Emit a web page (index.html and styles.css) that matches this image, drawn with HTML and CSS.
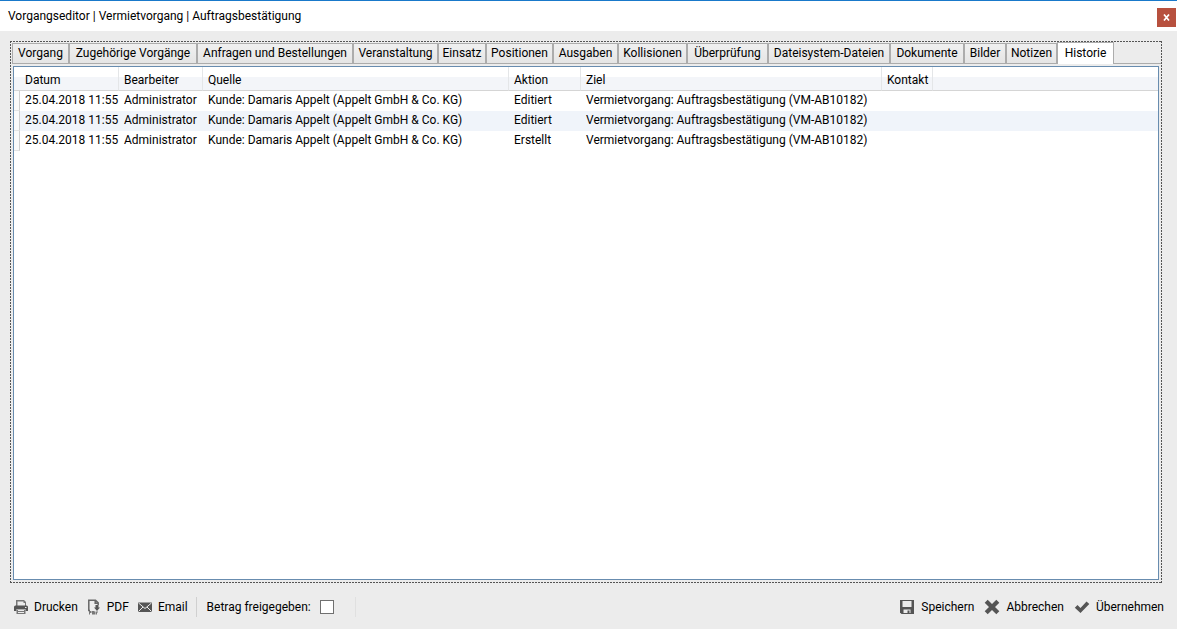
FILE: index.html
```html
<!DOCTYPE html>
<html lang="de">
<head>
<meta charset="utf-8">
<title>Vorgangseditor</title>
<link rel="stylesheet" href="styles.css">
</head>
<body>
<div class="window">
  <header class="titlebar">
    <h1 class="title">Vorgangseditor | Vermietvorgang | Auftragsbestätigung</h1>
    <button class="close" type="button" aria-label="Schließen"><svg width="7" height="7" viewBox="0 0 7 7"><path d="M1 .5 6 6.500M6 .5 1 6.500" stroke="#fff" stroke-width="1.700"/></svg></button>
  </header>
  <main class="editor">
    <div class="tabs" role="tablist">
      <button class="tab" role="tab" type="button">Vorgang</button>
      <button class="tab" role="tab" type="button">Zugehörige Vorgänge</button>
      <button class="tab" role="tab" type="button">Anfragen und Bestellungen</button>
      <button class="tab" role="tab" type="button">Veranstaltung</button>
      <button class="tab" role="tab" type="button">Einsatz</button>
      <button class="tab" role="tab" type="button">Positionen</button>
      <button class="tab" role="tab" type="button">Ausgaben</button>
      <button class="tab" role="tab" type="button">Kollisionen</button>
      <button class="tab" role="tab" type="button">Überprüfung</button>
      <button class="tab" role="tab" type="button">Dateisystem-Dateien</button>
      <button class="tab" role="tab" type="button">Dokumente</button>
      <button class="tab" role="tab" type="button">Bilder</button>
      <button class="tab" role="tab" type="button">Notizen</button>
      <button class="tab tab-active" role="tab" type="button" aria-selected="true">Historie</button>
    </div>
    <section class="panel" role="tabpanel">
      <table class="history">
        <colgroup>
          <col class="col-grip"><col class="col-date"><col class="col-user"><col class="col-source"><col class="col-action"><col class="col-target"><col class="col-contact"><col>
        </colgroup>
        <thead>
          <tr><td class="corner"></td><th>Datum</th><th>Bearbeiter</th><th>Quelle</th><th>Aktion</th><th>Ziel</th><th>Kontakt</th><td></td></tr>
        </thead>
        <tbody>
          <tr><td class="grip"></td><td>25.04.2018 11:55</td><td>Administrator</td><td>Kunde: Damaris Appelt (Appelt GmbH &amp; Co. KG)</td><td>Editiert</td><td>Vermietvorgang: Auftragsbestätigung (VM-AB10182)</td><td></td><td></td></tr>
          <tr><td class="grip"></td><td>25.04.2018 11:55</td><td>Administrator</td><td>Kunde: Damaris Appelt (Appelt GmbH &amp; Co. KG)</td><td>Editiert</td><td>Vermietvorgang: Auftragsbestätigung (VM-AB10182)</td><td></td><td></td></tr>
          <tr><td class="grip"></td><td>25.04.2018 11:55</td><td>Administrator</td><td>Kunde: Damaris Appelt (Appelt GmbH &amp; Co. KG)</td><td>Erstellt</td><td>Vermietvorgang: Auftragsbestätigung (VM-AB10182)</td><td></td><td></td></tr>
        </tbody>
      </table>
    </section>
  </main>
  <footer class="toolbar">
    <div class="group">
      <button class="action" type="button"><svg class="icon" viewBox="0 0 16 16"><path fill="#777" d="M4 1h7l2 2v4H3V1z"/><path fill="#ececec" d="M4.500 2.500h6V4h1.500v3h-7.500z"/><path fill="#555" d="M2.500 6.500h11a1.500 1.500 0 0 1 1.500 1.500v4h-2.500V10h-9v2H1V8a1.500 1.500 0 0 1 1.500-1.500z"/><path fill="#777" d="M3.500 10.500h9V15h-9z"/><path fill="#ececec" d="M5 11h6v1H5zm0 2h6v1H5zM12 8h1.500v1H12z"/></svg>Drucken</button>
      <button class="action" type="button"><svg class="icon" viewBox="0 0 16 16"><path fill="none" stroke="#666" stroke-width="1.500" d="M4 11.500H2.800V1.200h6.700l2.700 2.700V6M9.200 1.200v3h3"/><path fill="#555" d="M9.500 6h3v2.500H14L11 12 8 8.500h1.500z"/><path fill="#777" d="M3 12h2.500v2H4v1.500H3zM6 12h2.500l.5 1.500v2H6zM9.500 12.500h2.500v1h-1v2H9.500z"/></svg>PDF</button>
      <button class="action" type="button"><svg class="icon" viewBox="0 0 16 16"><path fill="#555" d="M1 3.500h14v9.500H1z"/><path fill="none" stroke="#ececec" d="m1.500 4 6.500 5.500L14.500 4M1.500 12.500l4.500-4.500M14.500 12.500 10 8"/></svg>Email</button>
      <span class="separator"></span>
      <label class="release" for="release">Betrag freigegeben:</label>
      <input class="check" type="checkbox" id="release">
      <span class="separator separator-light"></span>
    </div>
    <div class="group group-confirm">
      <button class="action" type="button"><svg class="icon" viewBox="0 0 16 16"><path fill="#555" d="M1 1h14v14H2.500L1 13.500z"/><path fill="#ececec" d="M3.500 2h9v6h-9zM4.500 10.500h7V14h-7z"/><path fill="#555" d="M8.500 11.500h2V14h-2z"/></svg>Speichern</button>
      <button class="action" type="button"><svg class="icon" viewBox="0 0 16 16"><path fill="#555" d="M3.700.7 8 5l4.300-4.300 3 3L11 8l4.300 4.300-3 3L8 11l-4.300 4.300-3-3L5 8 .7 3.700z"/></svg>Abbrechen</button>
      <button class="action" type="button"><svg class="icon" viewBox="0 0 16 16"><path fill="#555" d="m.8 8.800 2.700-2.700 3 2.900 6-6.500L15.300 5l-8.800 9z"/></svg>Übernehmen</button>
    </div>
  </footer>
</div>
</body>
</html>
```
FILE: styles.css
```css
* { box-sizing: border-box; }
body {
  margin: 0;
  font: 12px/16px Roboto, "Open Sans", sans-serif;
  color: #000;
  background: #ececec;
}
button { font: inherit; color: inherit; white-space: nowrap; }
.window {
  display: flex;
  flex-direction: column;
  min-height: 100vh;
  border-top: 1px solid #1979ca;
}
.titlebar {
  display: flex;
  align-items: center;
  justify-content: space-between;
  height: 30px;
  padding: 0 1px 0 8px;
  background: #fff;
}
.title { margin: 0; font-size: 12px; font-weight: 400; }
.close {
  display: grid;
  place-items: center;
  width: 19px;
  height: 19px;
  margin-top: 3px;
  padding: 0;
  border: 0;
  background: #b7503e;
}
/* Fine 2px/1px dashes, tighter than border-style: dashed gives. */
.editor {
  --dash: #555 0 2px, transparent 2px 3px;
  flex: 1;
  display: flex;
  flex-direction: column;
  margin: 10px 15px 0 10px;
  padding: 1px 1px 3px 2px;
  background:
    repeating-linear-gradient(90deg, var(--dash)) top / 100% 1px no-repeat,
    repeating-linear-gradient(90deg, var(--dash)) bottom / 100% 1px no-repeat,
    repeating-linear-gradient(var(--dash)) left / 1px 100% no-repeat,
    repeating-linear-gradient(var(--dash)) right / 1px 100% no-repeat;
}
.tabs {
  display: grid;
  grid-template-columns: 57px 128px 156px 85px 48px 67px 65px 69px 81px 122px 74px 42px 51px 57px;
  align-items: end;
  height: 22px;
  border-bottom: 1px solid #acacac;
}
.tab {
  height: 20px;
  padding: 0 0 2px;
  border: 1px solid #acacac;
  border-bottom: 0;
  background: linear-gradient(#f0f0f0, #e5e5e5);
}
.tab-active { height: 22px; margin-bottom: -1px; background: #fff; }
.panel {
  flex: 1;
  margin: 2px 2px 0 1px;
  border: 1px solid #688caf;
  background: #fff;
}
.history {
  width: 100%;
  table-layout: fixed;
  border-collapse: separate;
  border-spacing: 0;
}
.history th, .history td {
  height: 20px;
  padding: 0 5px 2px;
  text-align: left;
  font-weight: 400;
  white-space: nowrap;
}
.history thead th, .history thead td {
  height: 24px;
  border-bottom: 1px solid #d5d5d5;
  background: linear-gradient(#fff 0 45%, #f3f5f9 45% 100%);
}
.history thead th { padding: 2px 5px 0; border-right: 1px solid #e4e6e8; }
.history tbody tr:nth-child(even) { background: #f0f4fa; }
.history .corner, .history .grip { padding: 0; }
.history .grip { border-right: 1px solid #d0d0d0; border-bottom: 1px solid #e4e4e4; background: #fafafa; }
.col-grip { width: 6px; }
.col-date { width: 99px; }
.col-user { width: 84px; }
.col-source { width: 306px; }
.col-action { width: 72px; }
.col-target { width: 301px; }
.col-contact { width: 51px; }
.toolbar {
  display: flex;
  align-items: center;
  justify-content: space-between;
  height: 46px;
  padding: 2px 13px 0;
}
.group { display: flex; align-items: center; gap: 8px; }
.group-confirm { gap: 10px; }
.action {
  display: flex;
  align-items: center;
  gap: 5px;
  padding: 0;
  border: 0;
  background: none;
}
.group-confirm .action { gap: 6px; }
.icon { width: 16px; height: 16px; }
.separator { width: 1px; height: 20px; background: #d0d0d0; }
.separator-light { background: #e0e0e0; margin-left: 13px; }
.release { padding: 0 1px 0 2px; }
.check {
  appearance: none;
  width: 14px;
  height: 14px;
  margin: 0;
  border: 1px solid #707070;
  background: #fff;
}
```
